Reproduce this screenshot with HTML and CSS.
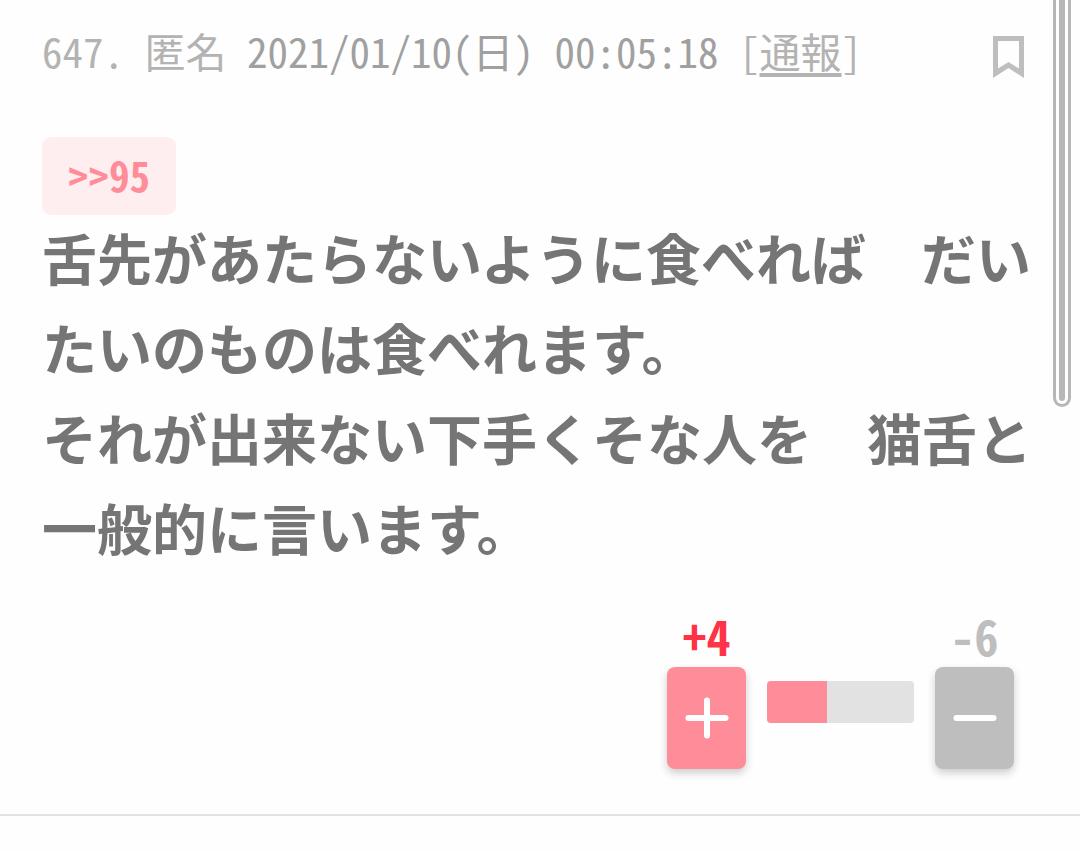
FILE: index.html
```html
<!DOCTYPE html>
<html lang="ja">
<head>
<meta charset="utf-8">
<meta name="viewport" content="width=device-width, initial-scale=1">
<title>コメント 647</title>
<link rel="stylesheet" href="styles.css">
</head>
<body>
<article class="comment">
  <header class="meta">
    <p class="meta-text">647. 匿名 <time class="date" datetime="2021-01-10T00:05:18">2021/01/10(日) 00:05:18</time> [<a class="report" href="#report">通報</a>]</p>
    <button class="bookmark" type="button" aria-label="ブックマーク">
      <svg width="32" height="42" viewBox="0 0 32 42" aria-hidden="true"><path fill="currentColor" fill-rule="evenodd" d="M0 0H31V42L15.500 32L0 42ZM5 5V32.500L15.500 26L26 32.500V5Z"/></svg>
    </button>
  </header>
  <a class="reply" href="#comment95">&gt;&gt;95</a>
  <p class="body">舌先があたらないように食べれば　だいたいのものは食べれます。<br>それが出来ない下手くそな人を　猫舌と一般的に言います。</p>
  <div class="votes">
    <div class="vote plus">
      <span class="count">+4</span>
      <button class="vote-button" type="button" aria-label="プラス">
        <svg width="44" height="42" viewBox="0 0 44 42" aria-hidden="true"><path d="M3.500 21H40.500M22 3.500V38.500"/></svg>
      </button>
    </div>
    <div class="ratio" role="img" aria-label="プラス 4、マイナス 6"><div class="ratio-plus" style="width:41%"></div></div>
    <div class="vote minus">
      <span class="count">-6</span>
      <button class="vote-button" type="button" aria-label="マイナス">
        <svg width="44" height="42" viewBox="0 0 44 42" aria-hidden="true"><path d="M3.500 21H40.500"/></svg>
      </button>
    </div>
  </div>
</article>
<div class="scroll-track" aria-hidden="true"><div class="scroll-thumb"></div></div>
</body>
</html>
```
FILE: styles.css
```css
* {
  box-sizing: border-box;
}

body {
  position: relative;
  margin: 0;
  background: #fefefe;
  color: #757575;
  font-family: "Noto Sans CJK JP", sans-serif;
  overflow: hidden;
}

p {
  margin: 0;
}

button {
  display: flex;
  align-items: center;
  justify-content: center;
  padding: 0;
  border: 0;
  background: none;
  cursor: pointer;
}

.meta-text,
.reply,
.count {
  font-feature-settings: "hwid";
}

.comment {
  padding: 20px 42px 45px;
  border-bottom: 2px solid #e2e2e2;
}

.meta {
  display: flex;
  justify-content: space-between;
  align-items: flex-start;
  padding-right: 13px;
  margin-bottom: 57px;
}

.meta-text {
  color: #b3b3b3;
  font-size: 41px;
  line-height: 60px;
}

.date {
  color: #a0a0a0;
}

.report {
  color: inherit;
  text-decoration-thickness: 4px;
  text-underline-offset: 5px;
  text-decoration-skip-ink: none;
}

.bookmark {
  margin-top: 16px;
  color: #bebebe;
}

.reply {
  display: block;
  width: fit-content;
  padding: 0 26px 4px;
  border-radius: 9px;
  background: #ffeef0;
  color: #ff8d99;
  font-size: 41px;
  font-weight: 700;
  line-height: 74px;
  text-decoration: none;
}

.body {
  margin-top: -4px;
  font-size: 55px;
  font-weight: 700;
  line-height: 90px;
}

.votes {
  display: flex;
  justify-content: flex-end;
  align-items: flex-end;
  gap: 21px;
  margin-top: 35px;
  padding-right: 24px;
}

.vote {
  display: flex;
  flex-direction: column;
  align-items: center;
}

.count {
  padding-bottom: 3px;
  font-size: 48px;
  font-weight: 700;
  line-height: 58px;
}

.plus .count {
  color: #ff3347;
}

.minus .count {
  color: #bebebe;
}

.vote-button {
  width: 79px;
  height: 102px;
  border-radius: 8px;
  box-shadow: 0 4px 8px rgba(0, 0, 0, 0.2);
}

.plus .vote-button {
  background: #ff8d99;
}

.minus .vote-button {
  background: #bebebe;
}

.vote-button svg {
  fill: none;
  stroke: #fff;
  stroke-width: 6px;
  stroke-linecap: round;
}

.ratio {
  width: 147px;
  height: 42px;
  margin-bottom: 46px;
  border-radius: 4px;
  background: #e2e2e2;
  overflow: hidden;
}

.ratio-plus {
  height: 100%;
  background: #ff8d99;
}

.scroll-track {
  position: absolute;
  top: 0;
  right: 9px;
  width: 18px;
  height: 407px;
  padding: 0 3px 3px;
  border: 3px solid #b7b7b7;
  border-top: 0;
  border-radius: 0 0 9px 9px;
}

.scroll-thumb {
  height: 100%;
  border-radius: 0 0 3px 3px;
  background: #b7b7b7;
}
```
